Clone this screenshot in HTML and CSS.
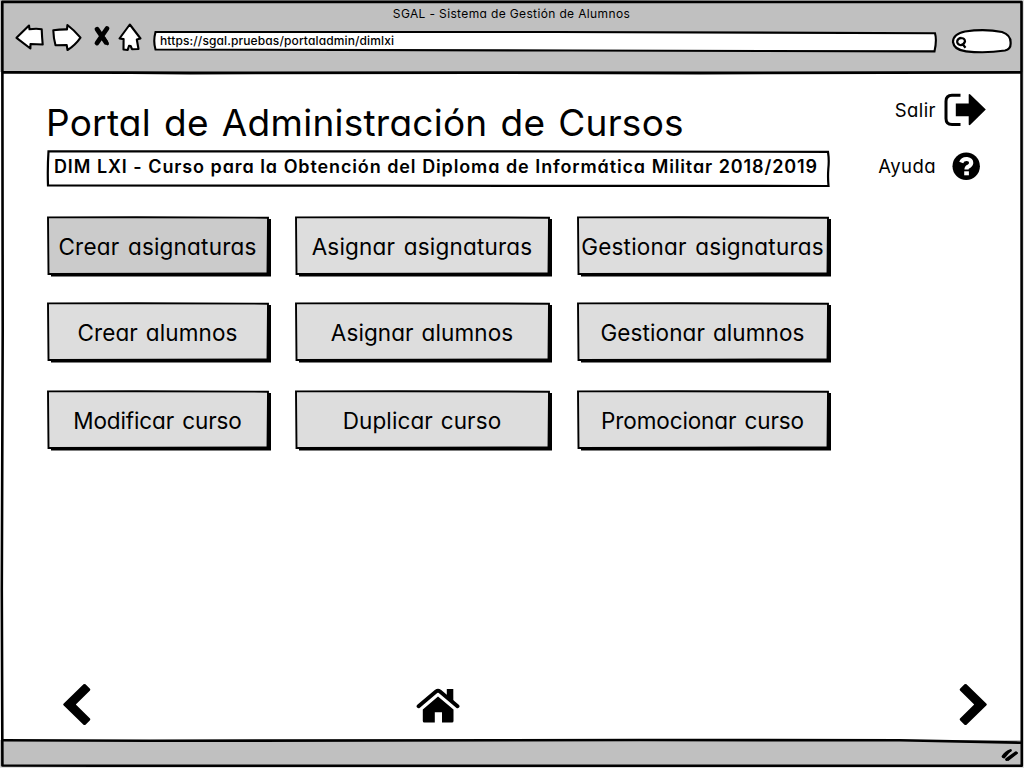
FILE: index.html
```html
<!DOCTYPE html>
<html lang="es">
<head>
<meta charset="utf-8">
<title>SGAL - Sistema de Gestión de Alumnos</title>
<link rel="stylesheet" href="styles.css">
</head>
<body>
<div class="window">
  <header class="chrome">
    <div class="window-title"><span>SGAL - Sistema de Gestión de Alumnos</span></div>
    <div class="toolbar">
      <svg class="nav-icons" viewBox="0 0 130 32" width="130" height="32">
        <g fill="#fff" stroke="#000" stroke-width="2.1" stroke-linejoin="round" stroke-linecap="round">
          <path d="M2.500 15.800 L15 3.500 L15.500 7.300 Q22 6.200 27.700 7.200 Q28 15 28.700 22.500 L16.500 22 L16.400 26.500 Z"/>
          <path d="M39.300 8.300 Q46 7.300 53 7.400 L53.400 3 Q60 8 66.500 15.600 Q61 23.500 53.500 28 L52.700 23 L41.500 23.200 Q39.500 16 39.300 8.300 Z"/>
          <path d="M115.800 2.500 L126.500 16.500 L122.800 17.500 L124.500 27 L118 27.200 L116.700 24 L115 23.800 L113.700 28 L109.500 27.500 L109.600 17.100 L105.500 16.500 Z"/>
        </g>
        <path d="M83 7.200 L92 20.300 M93 6.500 L83 21" fill="none" stroke="#000" stroke-width="4.800" stroke-linecap="round"/>
        <path d="M90 16 L93.500 21.800" fill="none" stroke="#000" stroke-width="3" stroke-linecap="round"/>
      </svg>
      <div class="address">
        <svg class="sketch" viewBox="0 0 784 24" preserveAspectRatio="none">
          <path d="M2.500 3 L400 3 L782 4.200 Q784 11 781.500 22.400 L420 21.500 L2.500 20.500 Q0 12 2.500 3 Z" fill="#fff" stroke="#000" stroke-width="2.100"/>
        </svg>
        <span class="url">https://sgal.pruebas/portaladmin/dimlxi</span>
      </div>
      <svg class="search" viewBox="0 0 62 26" width="62" height="26">
        <path d="M2 14 Q2 6 14 3.500 Q34 .7 51 4 Q60 7 59.600 15 Q60 21 54 22.500 Q34 25.500 15 23.300 Q3 22 2 14 Z" fill="#fff" stroke="#000" stroke-width="2.200"/>
        <path d="M9.500 10 Q14 9.800 14 13.500 Q12.500 17.500 9 17 Q5.800 16 6.200 13 Q7 10 10.500 9.800 M11.500 16 L14.500 19.800" fill="none" stroke="#000" stroke-width="2.200"/>
      </svg>
    </div>
  </header>

  <main class="page">
    <section class="content">
      <h1 class="heading"><span>Portal de Administración de Cursos</span></h1>
      <div class="course">
        <svg class="sketch" viewBox="0 0 784 38" preserveAspectRatio="none">
          <path d="M1.500 1.300 L330 1.300 L781 1.800 Q782.300 10 781.300 19 Q780.700 28 781.500 36 L330 35.700 L1 35.500 Q.4 18 1.500 1.300 Z" fill="#fff" stroke="#000" stroke-width="2.200"/>
        </svg>
        <span class="course-name">DIM LXI - Curso para la Obtención del Diploma de Informática Militar 2018/2019</span>
      </div>
      <nav class="actions">
        <button class="action selected"><span>Crear asignaturas</span></button>
        <button class="action"><span>Asignar asignaturas</span></button>
        <button class="action"><span>Gestionar asignaturas</span></button>
        <button class="action short"><span>Crear alumnos</span></button>
        <button class="action short"><span>Asignar alumnos</span></button>
        <button class="action short"><span>Gestionar alumnos</span></button>
        <button class="action compact"><span>Modificar curso</span></button>
        <button class="action short"><span>Duplicar curso</span></button>
        <button class="action compact"><span>Promocionar curso</span></button>
      </nav>
    </section>
    <aside class="session">
      <a class="session-link"><span>Salir</span>
        <svg viewBox="0 0 44 36" width="44" height="36">
          <path d="M17.500 3.200 H9 Q3 3.200 3 9.200 V26.500 Q3 32.500 9 32.500 H17.500" fill="none" stroke="#000" stroke-width="3"/>
          <path d="M12.800 11.500 H25.700 V2.500 Q26 1.500 27.300 2.400 L42.800 17.500 L27.300 32.700 Q26 33.700 25.700 32.500 V24.300 H12.800 Z"/>
        </svg>
      </a>
      <a class="session-link help"><span>Ayuda</span>
        <svg viewBox="0 0 44 36" width="44" height="36">
          <circle cx="23.200" cy="18.300" r="13.700"/>
          <path d="M18.200 14.500 Q19.500 10.800 24 11 Q28.300 11.500 28.200 15 Q27.800 17.500 25.300 18.700 Q23.500 19.500 23.500 21.600" fill="none" stroke="#fff" stroke-width="4.200"/>
          <path d="M21.200 23.300 h4.700 v4 h-4.700z" fill="#fff"/>
        </svg>
      </a>
    </aside>
  </main>

  <nav class="pager">
    <svg viewBox="0 0 30 44" width="30" height="44"><path d="M1.500 20.800 L21.500 1.300 Q22.500 .5 23.500 1.300 L28 5.800 Q28.700 6.600 28 7.400 L13.800 21.400 L28 35.500 Q28.700 36.300 28 37.200 L23.500 41.700 Q22.500 42.500 21.500 41.700 L1.500 22.200 Q.8 21.500 1.500 20.800 Z"/></svg>
    <svg viewBox="0 0 44 36" width="44" height="36">
      <path d="M22 8.500 L37.500 21.500 V33 Q37.500 34.500 36 34.500 H26 V24.300 H18.800 V34.500 H8.300 Q6.800 34.500 6.800 33 V21.500 Z"/>
      <path d="M2.600 18.200 L20 3.500 Q22 2 24 3.500 L41.500 18.200" fill="none" stroke="#000" stroke-width="3.900" stroke-linecap="round"/>
      <path d="M30.800 1 H37.300 V14 L30.800 8.500 Z"/>
    </svg>
    <svg viewBox="0 0 30 44" width="30" height="44"><path d="M28.500 20.800 L8.500 1.300 Q7.500 .5 6.500 1.300 L2 5.800 Q1.300 6.600 2 7.400 L16.200 21.400 L2 35.500 Q1.300 36.300 2 37.200 L6.500 41.700 Q7.500 42.500 8.500 41.700 L28.500 22.200 Q29.200 21.500 28.500 20.800 Z"/></svg>
  </nav>
  <footer class="status"></footer>

  <svg class="frame" viewBox="0 0 1024 768" width="1024" height="768">
    <path d="M1 740 L1 768 L1024 768 L1024 743 L940 741 L600 740 Z" fill="#c0c0c0"/>
    <path d="M0 767.300 H1024 M1023.500 0 V768" stroke="#ddd" stroke-width="1.500"/>
    <g fill="none" stroke="#000" stroke-linejoin="round">
      <path d="M2.300 1.800 L600 1.900 L1021.500 2 Q1021 350 1021.700 500 L1021.800 765.800 L520 765.700 L100 765.800 L2.400 765.500 L1.800 590 L2.700 330 Z" stroke-width="2.600"/>
      <path d="M3 72.300 L130 72.600 L190 73 L480 72.600 L700 73 L1021 72.300" stroke-width="2.800"/>
      <path d="M3 740.200 L150 740.800 L640 740 L900 740.200 L1021 742.700" stroke-width="2.600"/>
      <path d="M1003 756.500 Q1006 752 1010.500 750.500 M1006.500 759.500 L1016 752.700" stroke-width="2.800" stroke-linecap="round"/>
      <path d="M1004 757.500 L1009.500 751 M1008 760 L1017 753" stroke-width="2" stroke-linecap="round"/>
    </g>
  </svg>
</div>
<script src="script.js"></script>
</body>
</html>
```
FILE: styles.css
```css
* { box-sizing: border-box; }
body { margin: 0; background: #fff; color: #000; font-family: Inter, "Open Sans", sans-serif; font-feature-settings: "cv11"; }
svg { display: block; flex: none; }
span { white-space: nowrap; }
.window { position: relative; width: 1024px; height: 768px; display: flex; flex-direction: column; overflow: hidden; }
.chrome { height: 72px; flex: none; background: #c0c0c0; padding-top: 5px; }
.window-title { height: 17px; line-height: 17px; font-size: 12px; display: flex; justify-content: center; letter-spacing: .36px; padding-right: 1px; }
.toolbar { display: flex; align-items: flex-start; padding-left: 14px; }
.nav-icons { margin-right: 9px; }
.address { position: relative; width: 784px; height: 24px; margin: 7px 14px 0 0; padding-left: 7px; }
.url { position: relative; display: block; line-height: 23px; font-size: 12px; font-weight: 500; letter-spacing: .12px; }
.search { margin-top: 6px; }
.sketch { position: absolute; left: 0; top: 0; width: 100%; height: 100%; overflow: visible; }

.page { flex: 1; display: flex; padding: 18px 0 0 47px; }
.content { width: 784px; }
.heading { margin: 0 0 0 -1px; height: 60px; line-height: 65px; font-size: 37px; font-weight: 400; letter-spacing: .25px; word-spacing: 2.400px; }
.course { position: relative; height: 38px; padding-left: 7px; }
.course-name { position: relative; display: block; line-height: 33px; font-size: 18px; font-weight: 600; letter-spacing: .87px; word-spacing: .3px; }
.actions { display: grid; grid-template-columns: 224px 257px 254px; column-gap: 24.500px; row-gap: 26px; grid-template-rows: 60px 62px 60px; padding-top: 28px; margin-right: -2px; }
.action { position: relative; height: 60px; border: 0; padding: 0 3px 0 0; background: none; color: #000; font: inherit; font-size: 22.500px; letter-spacing: .2px; word-spacing: 2px; display: flex; align-items: center; justify-content: center; }
.action:nth-child(3n+2) { margin-left: -.5px; margin-right: .5px; }
.action.short { letter-spacing: .1px; word-spacing: 1.500px; }
.action.compact { letter-spacing: -.12px; word-spacing: 2px; }
.action span { position: relative; }

.session { padding: 2px 0 0 46px; }
.session-link { display: flex; align-items: center; justify-content: flex-end; gap: 7px; width: 110px; height: 36px; font-size: 18.500px; letter-spacing: .45px; }
.session-link.help { margin-top: 20px; }

.pager { height: 57px; flex: none; display: flex; justify-content: space-between; padding: 0 36px 0 62px; }
.pager svg:nth-child(2) { margin: 5px 175px 0 0; }
.status { height: 28px; flex: none; background: #c0c0c0; }
.frame { position: absolute; left: 0; top: 0; pointer-events: none; }
```
FILE: script.js
```js
// Gives every action button its hand-drawn outline and hard shadow.
document.querySelectorAll('.action').forEach(function (button) {
  var w = button.offsetWidth;
  var fill = button.classList.contains('selected') ? '#cbcbcb' : '#dddddd';
  var outline = 'M1 1.400 L' + w * 0.4 + ' 1.200 L' + (w - 3) + ' 1.700 L' + (w - 3.500) + ' 57.400 L' + w * 0.5 + ' 57.700 L1.500 58 Z';
  button.insertAdjacentHTML('afterbegin',
    '<svg class="sketch" viewBox="0 0 ' + w + ' 60">' +
    '<path d="M4 3 H' + w + ' V60.500 H4 Z"/>' +
    '<path d="' + outline + '" fill="' + fill + '" stroke="#000" stroke-width="1.900"/></svg>');
});
```
